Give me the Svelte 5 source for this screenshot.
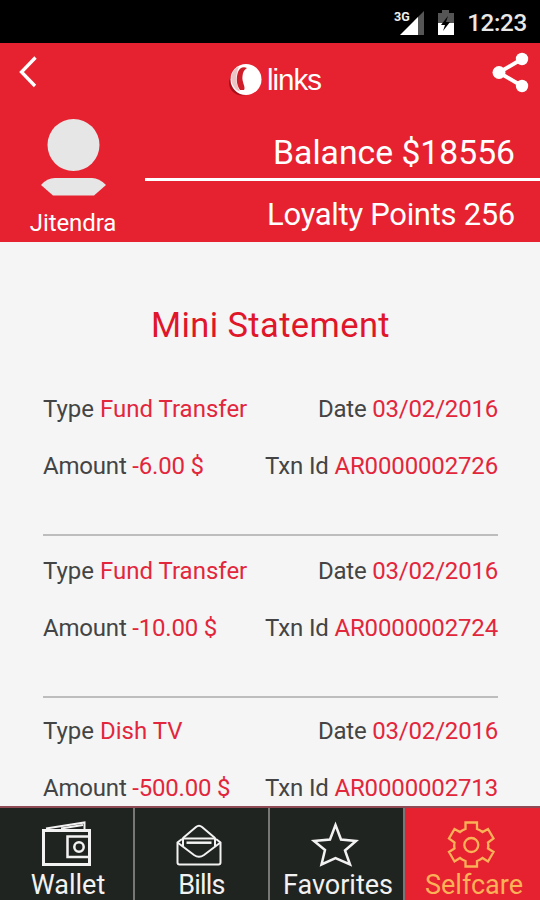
<!-- App.svelte -->
<script>
    let balance = 18556;
    let points = 256;
    let active = 'Selfcare';

    const tabs = ['Wallet', 'Bills', 'Favorites', 'Selfcare'];

    const transactions = [
        { type: 'Fund Transfer', date: '03/02/2016', amount: '-6.00 $', id: 'AR0000002726' },
        { type: 'Fund Transfer', date: '03/02/2016', amount: '-10.00 $', id: 'AR0000002724' },
        { type: 'Dish TV', date: '03/02/2016', amount: '-500.00 $', id: 'AR0000002713' },
    ];
</script>

<div class="screen">
    <div class="status-bar">
        <svg width="66" height="42" viewBox="390 0 66 42">
            <path d="M424 10V34H414V20Z" fill="#555" />
            <path d="M418 16V34H400Z" fill="#fff" />
            <path d="M442 9H449V12H454V22H438V12H442Z" fill="#555" />
            <path d="M438 22H454V34H438Z" fill="#fff" />
            <path d="M448 15L441 24H445L443 30L450 21H446Z" fill="#000" />
            <text x="394" y="19.500" class="network">3G</text>
        </svg>
        <span class="clock">12:23</span>
    </div>

    <header>
        <div class="title-bar">
            <button aria-label="Back">
                <svg width="18" height="32" viewBox="0 0 18 32">
                    <path d="M16.500 1.500L2.500 16L16 30" fill="none" stroke="#fff" stroke-width="3.300" />
                </svg>
            </button>
            <div class="logo">
                <svg width="38" height="38" viewBox="0 0 38 38">
                    <ellipse cx="16" cy="22" rx="13" ry="12.500" fill="#a80f1b" />
                    <circle cx="20" cy="18.500" r="15.500" fill="#fff" />
                    <path d="M13 5.500C5 9 3 19 8 26C9.500 28.500 11.500 30 14 30.500C9 22 9.500 13 13 5.500Z" fill="#ecc4c5" />
                    <path d="M21 7C17 5 13.500 7 12 11C10 17 10.500 24 14 29L18 29C20 26 15.500 21 16.500 15C17 11 18 9 21 7Z" fill="#cf1d2a" />
                </svg>
                <span>links</span>
            </div>
            <button aria-label="Share">
                <svg width="38" height="42" viewBox="0 0 38 42">
                    <path d="M30 7L7 20.500L30 34" fill="none" stroke="#fff" stroke-width="4" />
                    <circle cx="30" cy="7" r="6.200" fill="#fff" />
                    <circle cx="7" cy="20.500" r="6.500" fill="#fff" />
                    <circle cx="30" cy="34" r="6.200" fill="#fff" />
                </svg>
            </button>
        </div>
        <div class="account">
            <div class="user">
                <svg width="68" height="78" viewBox="0 0 68 78">
                    <circle cx="34.500" cy="26" r="26" fill="#e6e6e6" />
                    <path d="M2 66Q8 59 16 59H53Q60 59 67 66L55 76.500H14Z" fill="#e6e6e6" />
                </svg>
                <span class="name">Jitendra</span>
            </div>
            <div class="totals">
                <div class="balance"><span>Balance ${balance}</span></div>
                <div class="points"><span>Loyalty Points {points}</span></div>
            </div>
        </div>
    </header>

    <main>
        <h1>Mini Statement</h1>
        {#each transactions as item}
            <div class="transaction">
                <div class="row">
                    <span>Type <b>{item.type}</b></span>
                    <span class="date">Date <b>{item.date}</b></span>
                </div>
                <div class="row">
                    <span class="amount">Amount <b>{item.amount}</b></span>
                    <span class="txn">Txn Id <b>{item.id}</b></span>
                </div>
            </div>
        {/each}
    </main>

    <nav>
        {#each tabs as tab}
            <button class="tab {tab.toLowerCase()}" class:active={tab === active} on:click={() => active = tab}>
                <svg width="50" height="50" viewBox="0 0 50 50" fill="none" stroke="currentColor">
                    {#if tab === 'Wallet'}
                        <path d="M2.500 10.500H48.500V44.500H2.500Z" stroke-width="3" />
                        <path d="M5 8.500L43.500 2.500V9M20 8.500L42 5" stroke-width="2" />
                        <path d="M48 16.500H26.500V37H48" stroke-width="2.500" />
                        <circle cx="38" cy="27" r="4.700" stroke-width="2.500" />
                    {:else if tab === 'Bills'}
                        <path d="M8 19L3.500 22.500V42.500Q3.500 44.500 5.500 44.500H44.500Q46.500 44.500 46.500 42.500V22.500L42 19" stroke-width="2" />
                        <path d="M9 18L22 7Q25 4.500 28 7L41 18" stroke-width="2" />
                        <path d="M3.500 22.500L20 35Q25 38.500 30 35L46.500 22.500" stroke-width="2" />
                        <path d="M9 26V18.500H41V26" stroke-width="2" />
                        <path d="M12.500 22.700H37.500" stroke-width="2.500" />
                    {:else if tab === 'Favorites'}
                        <path d="M25.500 5L31 19.500L46 21L35 30.500L40 44.500L25.500 38L11.500 44.500L15 30L4 21L20 19.500Z" stroke-width="2.500" />
                    {:else}
                        <path d="M19.500 2.500H31V9Q34 10 36.500 12L42 9L47.500 18.500L42 22.500Q42.700 25.500 42 28.500L47.500 32L42 41.500L36.500 38Q34 40 31 41V46.500H19.500V41Q16.500 40 14 38L8.500 41.500L3 32L8.500 28.500Q7.800 25.500 8.500 22.500L3 18.500L8.500 9L14 12Q16.500 10 19.500 9Z" stroke-width="2.300" />
                        <circle cx="25.300" cy="25" r="7" stroke-width="2.300" />
                    {/if}
                </svg>
                <span>{tab}</span>
            </button>
        {/each}
    </nav>
</div>

<style>
    :global(body) {
        margin: 0;
        background-color: #000;
    }

    .screen {
        display: flex;
        flex-direction: column;
        width: 540px;
        height: 900px;
        overflow: hidden;
        background-color: #f5f5f5;
        font-family: Roboto, sans-serif;
    }

    button {
        background: none;
        border: none;
        padding: 0;
        font-family: inherit;
        cursor: pointer;
    }

    svg {
        display: block;
        flex: none;
    }

    .status-bar {
        display: flex;
        align-items: center;
        justify-content: flex-end;
        box-sizing: border-box;
        height: 43px;
        flex: none;
        padding-right: 13px;
        gap: 12px;
        background-color: #000;
        color: #e8e8e8;
    }

    .status-bar svg {
        margin-right: -1px;
    }

    .network {
        font-size: 12.5px;
        font-weight: bold;
        fill: #eee;
    }

    .clock {
        font-size: 24.2px;
        letter-spacing: -0.3px;
        font-weight: 500;
        line-height: 30px;
        padding-top: 3px;
    }

    header {
        height: 199px;
        flex: none;
        background-color: #e62230;
        color: #fff;
    }

    .title-bar {
        display: flex;
        align-items: flex-start;
        justify-content: space-between;
        height: 76px;
        box-sizing: border-box;
        padding: 9px 10px 0 19px;
    }

    .title-bar button:first-child {
        margin-top: 4px;
    }

    .logo {
        display: flex;
        align-items: center;
        gap: 3px;
        margin: 9px 0 0 18px;
        font-family: "Liberation Sans", sans-serif;
        font-size: 29.5px;
        letter-spacing: -1px;
    }

    .account {
        display: flex;
        height: 123px;
    }

    .user {
        width: 145px;
        flex: none;
        display: flex;
        flex-direction: column;
        align-items: center;
    }

    .name {
        font-size: 24px;
        line-height: 28px;
        margin: 12px 0 0 1px;
        letter-spacing: -0.1px;
    }

    .totals {
        flex: 1;
        text-align: right;
    }

    .balance {
        height: 59px;
        border-bottom: 3px solid #fff;
        padding-right: 25px;
        font-size: 33.7px;
        line-height: 67px;
    }

    .points {
        padding-right: 25px;
        font-size: 31px;
        letter-spacing: -0.3px;
        line-height: 67px;
    }

    main {
        flex: 1;
        min-height: 0;
        overflow: hidden;
        padding: 0 42px 0 43px;
    }

    h1 {
        margin: 62px 0 0;
        height: 90px;
        line-height: 42px;
        text-align: center;
        font-size: 34.5px;
        letter-spacing: 0.4px;
        font-weight: normal;
        color: #e0162a;
    }

    .transaction {
        display: flex;
        flex-direction: column;
        gap: 27px;
        padding-bottom: 53px;
        margin-bottom: 20px;
        border-bottom: 2px solid #bdbdbd;
    }

    .transaction:last-child {
        margin-top: -2px;
    }

    .row {
        display: flex;
        justify-content: space-between;
        font-size: 24px;
        line-height: 30px;
        color: #444;
    }

    .row b {
        font-weight: normal;
        color: #e2263c;
    }

    .date {
        letter-spacing: -0.2px;
    }

    .amount {
        letter-spacing: -0.2px;
    }

    .txn {
        letter-spacing: -0.15px;
    }

    nav {
        display: flex;
        height: 92px;
        flex: none;
        border-top: 2px solid #8e4a55;
        background-color: #202421;
    }

    .tab {
        width: 135px;
        box-sizing: border-box;
        display: flex;
        flex-direction: column;
        align-items: center;
        border-right: 2px solid #777;
        padding-top: 12px;
        color: #f2f2f2;
        font-size: 27px;
        line-height: 30px;
    }

    .tab svg {
        margin-right: 4px;
    }

    .tab span {
        margin-left: 3px;
    }

    .wallet svg {
        margin-right: 2px;
    }

    .bills svg {
        margin-right: 6px;
    }

    .bills span {
        margin-left: 0;
        letter-spacing: -0.8px;
    }

    .tab:last-child {
        border-right: none;
    }

    .active {
        background-color: #e62230;
        color: #fbb157;
    }
</style>
